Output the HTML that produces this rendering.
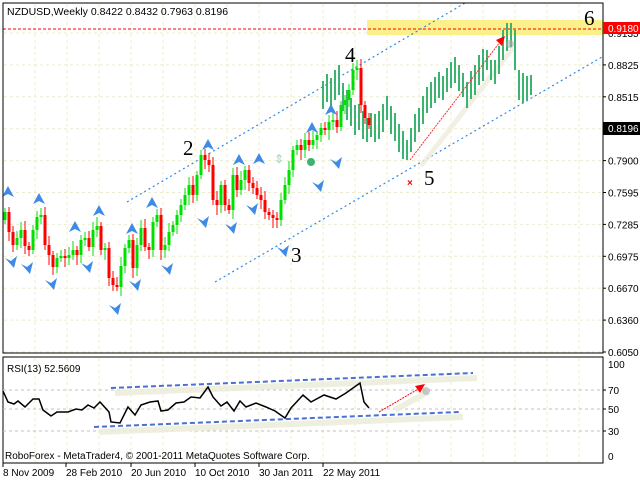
<!DOCTYPE html>
<html><head><meta charset="utf-8"><style>
html,body{margin:0;padding:0;background:#fff;width:640px;height:480px;overflow:hidden}
svg text{font-family:"Liberation Sans",sans-serif}
</style></head><body>
<svg id="s" width="640" height="480" viewBox="0 0 640 480" xmlns="http://www.w3.org/2000/svg">
<rect x="0" y="0" width="640" height="480" fill="#fff"/>
<g id="grid" stroke="#ecebd2" stroke-width="1" stroke-dasharray="3,3"></g>
<rect x="367" y="20" width="236" height="15" fill="#fbf08a"/>
<line x1="3" y1="29" x2="603" y2="29" stroke="#f00" stroke-dasharray="3,2"/>
<g id="chan" stroke="#2a8ae8" stroke-width="1.2" stroke-dasharray="2,3" fill="none">
<line x1="127" y1="202" x2="465" y2="3"/>
<line x1="215" y1="282" x2="602" y2="57"/>
</g>
<line x1="413" y1="160" x2="505" y2="42" stroke="#eeeedd" stroke-width="5" opacity="0.8" transform="translate(8,6)"/>
<g id="bars"></g>
<g id="cand"></g>
<g id="marks" fill="#3d8be6"></g>
<line x1="410" y1="160" x2="500" y2="42" stroke="#f03030" stroke-width="1" stroke-dasharray="2,1"/>
<polygon points="505,36 496,40 502,46" fill="#f00"/>
<circle cx="510" cy="44" r="4" fill="#aaa" opacity="0.6"/>
<text x="407" y="186" font-size="10" fill="#f00" font-weight="bold">×</text>
<g font-size="21" fill="#000">
<text x="183" y="155" style="font-family:'Liberation Serif',serif">2</text>
<text x="291" y="262" style="font-family:'Liberation Serif',serif">3</text>
<text x="345" y="62" style="font-family:'Liberation Serif',serif">4</text>
<text x="424" y="185" style="font-family:'Liberation Serif',serif">5</text>
<text x="584" y="25" style="font-family:'Liberation Serif',serif">6</text>
</g>
<text x="7" y="15" font-size="10.5">NZDUSD,Weekly  0.8422 0.8432 0.7963 0.8196</text>
<rect x="3" y="3" width="600" height="350" fill="none" stroke="#000"/>
<g id="pax" font-size="10"></g>
<rect x="603" y="22" width="37" height="12" fill="#f00"/>
<text x="608" y="32" font-size="10" fill="#fff">0.9180</text>
<rect x="603" y="122" width="37" height="13" fill="#000"/>
<text x="608" y="132" font-size="10" fill="#fff">0.8196</text>
<!-- RSI -->
<rect x="3" y="357" width="600" height="106" fill="none" stroke="#000"/>
<g stroke="#c0c0c0" stroke-dasharray="3,3"><line x1="3" y1="390" x2="603" y2="390"/><line x1="3" y1="409" x2="603" y2="409"/><line x1="3" y1="431" x2="603" y2="431"/></g>
<g stroke="#eeeedd" stroke-width="6" opacity="0.9"><line x1="115" y1="393" x2="477" y2="378"/><line x1="99" y1="432" x2="463" y2="417"/><line x1="395" y1="410" x2="428" y2="392"/></g>
<g stroke="#4a6fd8" stroke-width="2" stroke-dasharray="5,3"><line x1="111" y1="388" x2="473" y2="373"/><line x1="94" y1="427" x2="459" y2="412"/></g>
<line x1="379" y1="412" x2="420" y2="388" stroke="#f00" stroke-dasharray="2,1"/>
<polygon points="425,384 415,386 420,393" fill="#f00"/>
<circle cx="426" cy="391" r="4" fill="#aaa" opacity="0.6"/>
<polyline fill="none" stroke="#000" stroke-width="1.5" points="3,391 8,402 14,404 18,401 25,407 33,399 39,399 43,410 51,416 57,412 68,412 76,409 82,410 88,405 94,408 100,402 109,412 111,422 120,423 128,407 135,415 141,405 150,402 158,401 161,411 168,410 176,403 184,402 191,397 200,398 208,387 213,397 221,406 227,402 234,411 240,401 246,407 256,403 266,407 275,411 285,418 291,408 303,395 311,402 324,395 336,399 346,393 360,383 364,402 369,408"/>
<text x="7" y="372" font-size="10">RSI(13) 52.5609</text>
<text x="5" y="459" font-size="10">RoboForex - MetaTrader4, © 2001-2011 MetaQuotes Software Corp.</text>
<g font-size="10"><text x="608" y="368">100</text><text x="608" y="394">70</text><text x="608" y="413">50</text><text x="608" y="435">30</text><text x="608" y="460">0</text></g>
<g stroke="#000"><line x1="603" y1="390" x2="606" y2="390"/><line x1="603" y1="409" x2="606" y2="409"/><line x1="603" y1="431" x2="606" y2="431"/></g>
<g font-size="10"><text x="3" y="476">8 Nov 2009</text><text x="66" y="476">28 Feb 2010</text><text x="131" y="476">20 Jun 2010</text><text x="195" y="476">10 Oct 2010</text><text x="259" y="476">30 Jan 2011</text><text x="323" y="476">22 May 2011</text></g>
<g stroke="#000"><line x1="3" y1="463" x2="3" y2="467"/><line x1="66" y1="463" x2="66" y2="467"/><line x1="131" y1="463" x2="131" y2="467"/><line x1="195" y1="463" x2="195" y2="467"/><line x1="259" y1="463" x2="259" y2="467"/><line x1="323" y1="463" x2="323" y2="467"/></g>
</svg>
<script>
(function(){
var NS="http://www.w3.org/2000/svg";
function el(p,t,a){var e=document.createElementNS(NS,t);for(var k in a)e.setAttribute(k,a[k]);document.getElementById(p).appendChild(e);return e;}
for(var x=35;x<603;x+=32)el("grid","line",{x1:x,y1:4,x2:x,y2:352});
for(var y=33;y<353;y+=31.9)el("grid","line",{x1:4,y1:y,x2:602,y2:y});
for(var x=35;x<603;x+=32)el("grid","line",{x1:x,y1:358,x2:x,y2:462});
var labs=["0.9135","0.8825","0.8515","0.8196","0.7900","0.7595","0.7285","0.6975","0.6670","0.6360","0.6050"];
for(var i=0;i<labs.length;i++){var yy=33+i*31.9; if(i==3)continue; var t=el("pax","text",{x:608,y:yy+4});t.textContent=labs[i];el("pax","line",{x1:603,y1:yy,x2:606,y2:yy,stroke:"#000"});}
var c=[212,232,245,238,230,246,250,230,217,215,245,255,267,258,256,258,255,250,255,240,238,247,230,226,250,248,278,285,287,266,248,240,268,245,228,247,250,222,215,250,245,232,225,215,205,195,185,195,175,155,160,165,200,205,185,205,210,175,190,180,170,183,188,195,200,212,215,218,220,200,185,170,150,145,150,140,145,140,135,128,130,122,120,127,105,100,90,70,68,105,118,125];
var bars=[[323,95,14],[327,88,14],[331,92,14],[335,85,15],[339,80,15],[343,97,14],[347,105,15],[351,112,14],[355,120,15],[359,117,13],[363,125,14],[367,130,12],[371,125,12],[375,128,14],[379,125,14],[383,118,14],[387,108,12],[391,120,14],[395,127,14],[399,138,14],[403,145,14],[407,150,10],[411,140,12],[415,128,14],[419,120,12],[423,110,14],[427,100,13],[431,95,13],[435,90,13],[439,85,13],[443,88,12],[447,80,12],[451,75,13],[455,70,13],[459,78,13],[463,85,12],[467,95,13],[471,85,14],[475,80,15],[479,70,15],[483,65,16],[487,60,10],[491,70,10],[495,72,12],[499,60,14],[503,45,15],[507,37,14],[511,35,12],[515,50,20],[519,85,15],[523,88,15],[527,88,12],[531,85,10]];
bars.forEach(function(b){el("bars","rect",{x:b[0]-1,y:b[1]-b[2],width:2,height:2*b[2],fill:"#3cb371"});});
for(var i=0;i<c.length;i++){var x=5+4*i,o=i?c[i-1]:c[0]+8,cl=c[i];var g=cl<o;var col=g?"#00e000":"#f00";
var bt=Math.min(o,cl),bb=Math.max(o,cl);var h=Math.max(bb-bt,2);
var wt=bt-4-(i*7%6),wb=bb+4+(i*5%7);
el("cand","line",{x1:x,y1:wt,x2:x,y2:wb,stroke:col,"stroke-width":1});
el("cand","rect",{x:x-1.5,y:bt,width:3,height:h,fill:col});}
var up=[[8,192],[39,199],[75,227],[99,211],[132,229],[152,203],[208,145],[239,160],[259,159],[312,128],[331,110]];
var dn=[[11,262],[27,268],[51,284],[87,267],[115,309],[135,285],[167,269],[203,222],[231,228],[252,209],[283,251],[318,186],[336,163]];
up.forEach(function(p){el("marks","polygon",{points:(p[0])+","+(p[1]-6)+" "+(p[0]+6)+","+(p[1]+5)+" "+p[0]+","+(p[1]+2)+" "+(p[0]-6)+","+(p[1]+5)});});
dn.forEach(function(p){el("marks","polygon",{points:(p[0]+3)+","+(p[1]+6)+" "+(p[0]-6)+","+(p[1]-4)+" "+p[0]+","+(p[1]-1)+" "+(p[0]+6)+","+(p[1]-6)});});
el("marks","circle",{cx:311,cy:162,r:4,fill:"#3cb371"});
var u=el("marks","text",{x:274,y:163,"font-size":"12",fill:"#9fd4b0"});u.textContent="⇕";
})();
</script>
</body></html>
